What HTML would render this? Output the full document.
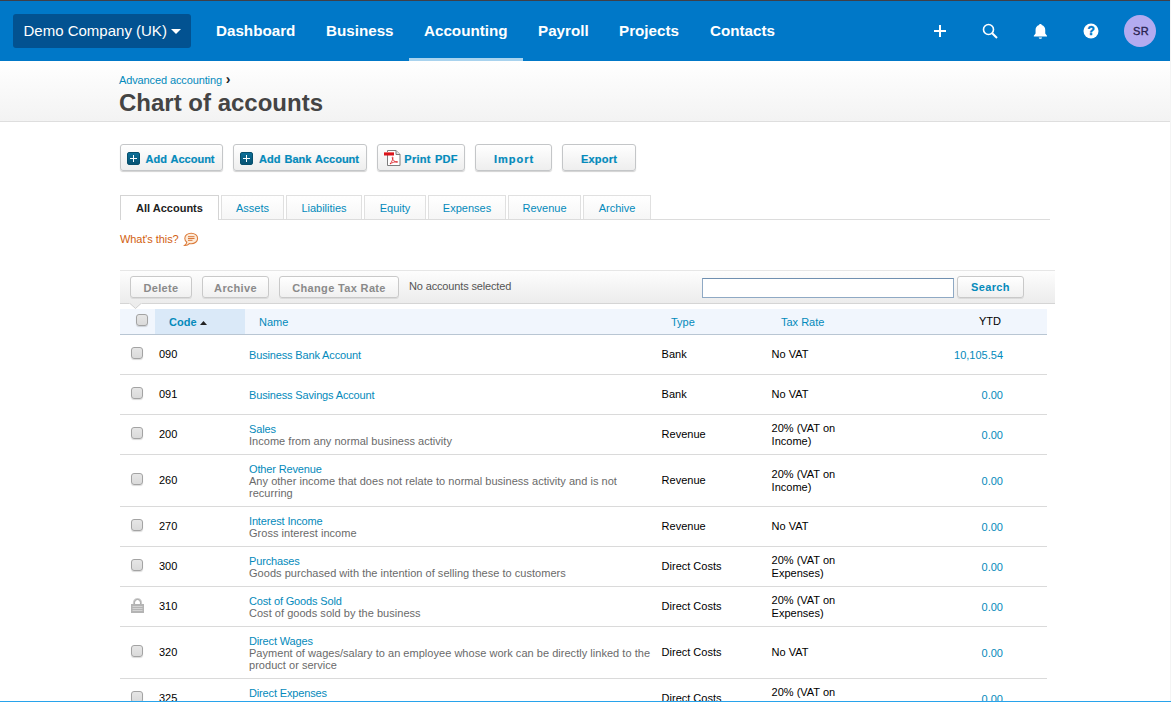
<!DOCTYPE html>
<html>
<head>
<meta charset="utf-8">
<title>Chart of accounts</title>
<style>
*{box-sizing:border-box;margin:0;padding:0}
html,body{width:1171px;height:702px;overflow:hidden;background:#fff}
body{font-family:"Liberation Sans",sans-serif;font-size:11px;color:#000;position:relative}
a{text-decoration:none;color:#048abb}
.abs{position:absolute}
/* nav */
#nav{position:absolute;left:0;top:0;width:1171px;height:61px;background:#0078c8;border-top:1px solid #3f3f48}
#org{position:absolute;left:13px;top:13px;width:178px;height:34px;background:#025291;border-radius:3px;color:#fff;font-size:15px;line-height:34px;padding-left:10.5px;white-space:nowrap}
#org i{position:absolute;left:158px;top:15px;width:0;height:0;border-left:5px solid transparent;border-right:5px solid transparent;border-top:5px solid #fff}
.nv{position:absolute;top:0;height:60px;line-height:59px;color:#fff;font-weight:bold;font-size:15.2px;white-space:nowrap}
#nav .ul{position:absolute;left:409px;top:57px;width:114px;height:3px;background:#a9d3ee}
.ic{position:absolute}
#av{position:absolute;left:1124px;top:14px;width:32px;height:32px;border-radius:16px;background:#b3abf0;color:#2a2350;font-size:11px;font-weight:normal;-webkit-text-stroke:.35px #2a2350;text-align:center;line-height:32px;letter-spacing:.3px;padding-left:2px}
/* header */
#hd{position:absolute;left:0;top:61px;width:1171px;height:61px;background:linear-gradient(#ffffff,#f3f3f3);border-bottom:1px solid #dedede}
#bc{position:absolute;left:119px;top:12px;line-height:14px;font-size:11px;letter-spacing:-.12px;color:#048abb;white-space:nowrap}
#bc b{color:#222;font-size:14px;margin-left:1px;line-height:0;position:relative;top:0px}
#ttl{position:absolute;left:119px;top:27px;font-size:24px;font-weight:bold;color:#444;white-space:nowrap;line-height:30px}
/* buttons */
.btn{position:absolute;top:144px;height:27px;padding-top:2px;border:1px solid #c4c6c8;border-radius:3px;background:linear-gradient(#ffffff,#eeeeee);box-shadow:0 1px 1px rgba(0,0,0,.18);color:#048abb;font-weight:bold;font-size:11px;line-height:25px;white-space:nowrap;text-align:center;word-spacing:1px;-webkit-text-stroke:.2px #048abb}
.btn .pl{position:absolute;left:6px;top:7px;width:13px;height:13px;background:linear-gradient(#0d6f99,#085372);border:1px solid #07506d;border-radius:2px}
.btn .pl:before{content:"";position:absolute;left:2px;top:5px;width:7px;height:1px;background:#fff}
.btn .pl:after{content:"";position:absolute;left:5px;top:2px;width:1px;height:7px;background:#fff}
/* tabs */
#tabline{position:absolute;left:120px;top:219px;width:930px;height:1px;background:#dcdcdc}
.tab{position:absolute;top:195px;height:24px;border:1px solid #e0e0e0;border-bottom:none;background:linear-gradient(#fff,#f6f6f6);color:#048abb;font-size:11px;line-height:24px;text-align:center;white-space:nowrap}
.tab.on{color:#222;font-weight:bold;height:25px;background:#fff;border-color:#d4d4d4}
#wt{position:absolute;left:120px;top:233px;color:#d2600f;letter-spacing:-.08px;font-size:11px;white-space:nowrap}
/* toolbar */
#tb{position:absolute;left:120px;top:270px;width:935px;height:34px;background:linear-gradient(#fdfdfd,#ececec);border-top:1px solid #e6e6e6;border-bottom:1px solid #d5d5d5}
.gb{position:absolute;top:5px;height:22px;border:1px solid #c9c9c9;border-radius:3px;background:linear-gradient(#ffffff,#f0f0f0);box-shadow:0 1px 0 rgba(0,0,0,.08);color:#8a8a8a;font-weight:bold;font-size:11px;line-height:22px;letter-spacing:.35px;text-align:center;white-space:nowrap}
#nas{position:absolute;left:289px;top:9px;font-size:11px;color:#555;letter-spacing:-.15px;white-space:nowrap}
#si{position:absolute;left:582px;top:6.500px;width:252px;height:20px;border:1px solid #8fa9c4;border-top-color:#6f8fb0;background:#fff}
#sb{color:#048abb;line-height:20px}
/* table */
#th{position:absolute;left:120px;top:309px;width:927px;height:26px;background:#f1f6fd;border-bottom:1px solid #b9c6d3}
#th .srt{position:absolute;left:35px;top:0;width:90px;height:25px;background:#dae9f8}
#th span{position:absolute;top:7px;color:#048abb;font-size:11px;white-space:nowrap}
.row{position:absolute;left:120px;width:927px;border-bottom:1px solid #dadada}
.row span{position:absolute;white-space:nowrap;font-size:11px;line-height:13px}
.cb{position:absolute;left:11px;width:12px;height:12px;border:1px solid #a3a3a3;border-radius:3px;background:linear-gradient(#e6e6e6,#dadada);box-shadow:0 1px 1px rgba(0,0,0,.15)}
.cd{left:39px;color:#000}
.nm{left:129px;color:#048abb;letter-spacing:-.15px}
.ds{left:129px;color:#6a6a6a;letter-spacing:.03px}
.ty{left:541.600px}
.tx{left:651.600px;line-height:12px}
.yt{right:44px;color:#048abb}
#bot{position:absolute;left:0;top:701px;width:1171px;height:1px;background:#28a3eb}
#rc{position:absolute;left:1170px;top:0;width:1px;height:701px;background:#f4f4f4}
</style>
</head>
<body>
<div id="nav">
  <div id="org">Demo Company (UK)<i></i></div>
  <div class="nv" style="left:216px">Dashboard</div>
  <div class="nv" style="left:326px">Business</div>
  <div class="nv" style="left:424px">Accounting</div>
  <div class="nv" style="left:538px">Payroll</div>
  <div class="nv" style="left:619px">Projects</div>
  <div class="nv" style="left:710px">Contacts</div>
  <div class="ul"></div>
  <svg class="ic" style="left:932px;top:22px" width="16" height="16" viewBox="0 0 16 16"><path d="M8 2v12M2 8h12" stroke="#fff" stroke-width="2" fill="none"/></svg>
  <svg class="ic" style="left:981px;top:21px" width="18" height="18" viewBox="0 0 18 18"><circle cx="7.5" cy="7.5" r="5" stroke="#fff" stroke-width="1.6" fill="none"/><path d="M11.2 11.2L16 16" stroke="#fff" stroke-width="2" fill="none"/></svg>
  <svg class="ic" style="left:1032px;top:22px" width="18" height="18" viewBox="0 0 18 18"><g transform="translate(-0.4,-0.3) scale(1.1,1.03)"><path d="M8 1.2c-.8 0-1.200.5-1.200 1.100C4.600 3 3.600 4.900 3.600 7v3.500L2 12.700v.8h12v-.8l-1.600-2.200V7c0-2.100-1-4-3.200-4.700 0-.6-.4-1.100-1.200-1.100zM6.500 14.300c0 .8.700 1.400 1.500 1.400s1.500-.6 1.500-1.400z" fill="#fff"/></g></svg>
  <svg class="ic" style="left:1082.600px;top:22.100px" width="16" height="16" viewBox="0 0 16 16"><circle cx="8" cy="8" r="7.500" fill="#fff"/><text x="8.100" y="12.300" font-family="Liberation Sans" font-weight="bold" font-size="12" text-anchor="middle" fill="#0078c8" stroke="#0078c8" stroke-width=".45">?</text></svg>
  <div id="av">SR</div>
</div>
<div id="hd">
  <div id="bc">Advanced accounting <b>›</b></div>
  <div id="ttl">Chart of accounts</div>
</div>

<div class="btn" style="left:120px;width:103px;padding-left:17px"><i class="pl"></i>Add Account</div>
<div class="btn" style="left:233px;width:134px;padding-left:18px"><i class="pl"></i>Add Bank Account</div>
<div class="btn" style="left:377px;width:88px;padding-left:20px;letter-spacing:.25px"><svg style="position:absolute;left:6px;top:4px" width="18" height="18" viewBox="0 0 18 18"><path d="M3.500 1.500h8.500l4 4v11h-12.500z" fill="#fff" stroke="#7d7d7d"/><path d="M12 1.500v4h4" fill="#e4e4e4" stroke="#7d7d7d"/><rect x="0" y="3" width="10" height="3.500" fill="#d9151c"/><rect x="0" y="3" width="10" height="1" fill="#ef6a6a"/><path d="M6 15c1.600-1.800 2.800-4.300 3-6.200.1-1-.9-1-.8 0 .4 2.200 2.400 4.200 4.800 4.500.9.100.9-.8 0-.7-2.500.2-5 1-7 2.400z" fill="none" stroke="#d9151c" stroke-width=".8"/></svg>Print PDF</div>
<div class="btn" style="left:475px;width:77px;letter-spacing:1px;padding-left:1px">Import</div>
<div class="btn" style="left:562px;width:74px;letter-spacing:.2px">Export</div>

<div id="tabline"></div>
<div class="tab on" style="left:120px;width:99px">All Accounts</div>
<div class="tab" style="left:221px;width:63px">Assets</div>
<div class="tab" style="left:286px;width:76px">Liabilities</div>
<div class="tab" style="left:364px;width:62px">Equity</div>
<div class="tab" style="left:428px;width:78px">Expenses</div>
<div class="tab" style="left:508px;width:73px">Revenue</div>
<div class="tab" style="left:583px;width:68px">Archive</div>
<div id="wt">What's this? <svg style="position:absolute;left:63px;top:-1px" width="16" height="16" viewBox="0 0 16 16"><path d="M8.200 1.200C4.600 1.200 1.800 3.500 1.800 6.400c0 1.500.8 2.800 2 3.700-.2 1.300-.9 2.400-2.300 3.300 2 .2 3.700-.5 4.800-1.800.6.100 1.200.2 1.900.2 3.600 0 6.400-2.400 6.400-5.400S11.800 1.200 8.200 1.200z" fill="#fdebd9" stroke="#dc7c3c" stroke-width="1.050"/><path d="M5 4.700h6.500M5 6.500h6.500M5 8.300h4.500" stroke="#d9793a" stroke-width="1"/></svg></div>

<div id="tb">
  <div class="gb" style="left:10px;width:62px">Delete</div>
  <div class="gb" style="left:82px;width:67px">Archive</div>
  <div class="gb" style="left:159px;width:120px">Change Tax Rate</div>
  <div id="nas">No accounts selected</div>
  <div id="si"></div>
  <div class="gb" id="sb" style="left:837px;width:67px">Search</div>
</div>

<svg style="position:absolute;left:129px;top:303px" width="13" height="7" viewBox="0 0 13 7"><path d="M0 0h13v.5H0z" fill="#ececec"/><path d="M1 .5L6.500 5.500 12 .5z" fill="#ececec" stroke="#cfcfcf" stroke-width="1"/><path d="M1.500 0h10v1h-10z" fill="#ececec"/></svg>
<div id="th">
  <div class="srt"></div>
  <i class="cb" style="left:16px;top:5px"></i>
  <span style="left:49px;font-weight:bold">Code <svg width="7" height="4" viewBox="0 0 7 4" style="margin-left:0px;margin-bottom:1px"><path d="M0 4L3.500 0 7 4z" fill="#222"/></svg></span>
  <span style="left:139px">Name</span>
  <span style="left:551px">Type</span>
  <span style="left:661px">Tax Rate</span>
  <span style="right:46px;color:#000;top:6px">YTD</span>
</div>
<!--ROWS-->
<div class="row" style="top:335px;height:40px"><i class="cb" style="top:12px"></i><span class="cd" style="top:13px">090</span><span class="nm" style="top:14px">Business Bank Account</span><span class="ty" style="top:13px">Bank</span><span class="tx" style="top:13px">No VAT</span><span class="yt" style="top:14px">10,105.54</span></div>
<div class="row" style="top:375px;height:40px"><i class="cb" style="top:12px"></i><span class="cd" style="top:13px">091</span><span class="nm" style="top:14px">Business Savings Account</span><span class="ty" style="top:13px">Bank</span><span class="tx" style="top:13px">No VAT</span><span class="yt" style="top:14px">0.00</span></div>
<div class="row" style="top:415px;height:40px"><i class="cb" style="top:12px"></i><span class="cd" style="top:13px">200</span><span class="nm" style="top:8px">Sales</span><span class="ds" style="top:20px">Income from any normal business activity</span><span class="ty" style="top:13px">Revenue</span><span class="tx" style="top:7px">20% (VAT on<br>Income)</span><span class="yt" style="top:14px">0.00</span></div>
<div class="row" style="top:455px;height:52px"><i class="cb" style="top:18px"></i><span class="cd" style="top:19px">260</span><span class="nm" style="top:8px">Other Revenue</span><span class="ds" style="top:20px">Any other income that does not relate to normal business activity and is not</span><span class="ds" style="top:32px">recurring</span><span class="ty" style="top:19px">Revenue</span><span class="tx" style="top:13px">20% (VAT on<br>Income)</span><span class="yt" style="top:20px">0.00</span></div>
<div class="row" style="top:507px;height:40px"><i class="cb" style="top:12px"></i><span class="cd" style="top:13px">270</span><span class="nm" style="top:8px">Interest Income</span><span class="ds" style="top:20px">Gross interest income</span><span class="ty" style="top:13px">Revenue</span><span class="tx" style="top:13px">No VAT</span><span class="yt" style="top:14px">0.00</span></div>
<div class="row" style="top:547px;height:40px"><i class="cb" style="top:12px"></i><span class="cd" style="top:13px">300</span><span class="nm" style="top:8px">Purchases</span><span class="ds" style="top:20px">Goods purchased with the intention of selling these to customers</span><span class="ty" style="top:13px">Direct Costs</span><span class="tx" style="top:7px">20% (VAT on<br>Expenses)</span><span class="yt" style="top:14px">0.00</span></div>
<div class="row" style="top:587px;height:40px"><svg style="position:absolute;left:11px;top:10px" width="13" height="16" viewBox="0 0 13 16"><path d="M3 8V5.500a3.500 3.500 0 0 1 7 0V8" fill="#fff" stroke="#cfcfcf" stroke-width="2.200"/><path d="M3.400 8V5.500a3.100 3.100 0 0 1 6.200 0V8" fill="none" stroke="#a9a9a9" stroke-width="1"/><rect x="0" y="7" width="13" height="9" fill="#b4b4b4"/><path d="M1.500 9.500h10M1.500 11.500h10M1.500 13.500h10" stroke="#d3d3d3" stroke-width="1"/></svg><span class="cd" style="top:13px">310</span><span class="nm" style="top:8px">Cost of Goods Sold</span><span class="ds" style="top:20px">Cost of goods sold by the business</span><span class="ty" style="top:13px">Direct Costs</span><span class="tx" style="top:7px">20% (VAT on<br>Expenses)</span><span class="yt" style="top:14px">0.00</span></div>
<div class="row" style="top:627px;height:52px"><i class="cb" style="top:18px"></i><span class="cd" style="top:19px">320</span><span class="nm" style="top:8px">Direct Wages</span><span class="ds" style="top:20px">Payment of wages/salary to an employee whose work can be directly linked to the</span><span class="ds" style="top:32px">product or service</span><span class="ty" style="top:19px">Direct Costs</span><span class="tx" style="top:19px">No VAT</span><span class="yt" style="top:20px">0.00</span></div>
<div class="row" style="top:679px;height:40px"><i class="cb" style="top:12px"></i><span class="cd" style="top:13px">325</span><span class="nm" style="top:8px">Direct Expenses</span><span class="ds" style="top:20px">Expenses incurred that relate directly to earning revenue</span><span class="ty" style="top:13px">Direct Costs</span><span class="tx" style="top:7px">20% (VAT on<br>Expenses)</span><span class="yt" style="top:14px">0.00</span></div>
<!--/ROWS-->
<div id="rc"></div>
<div id="bot"></div>
</body>
</html>
